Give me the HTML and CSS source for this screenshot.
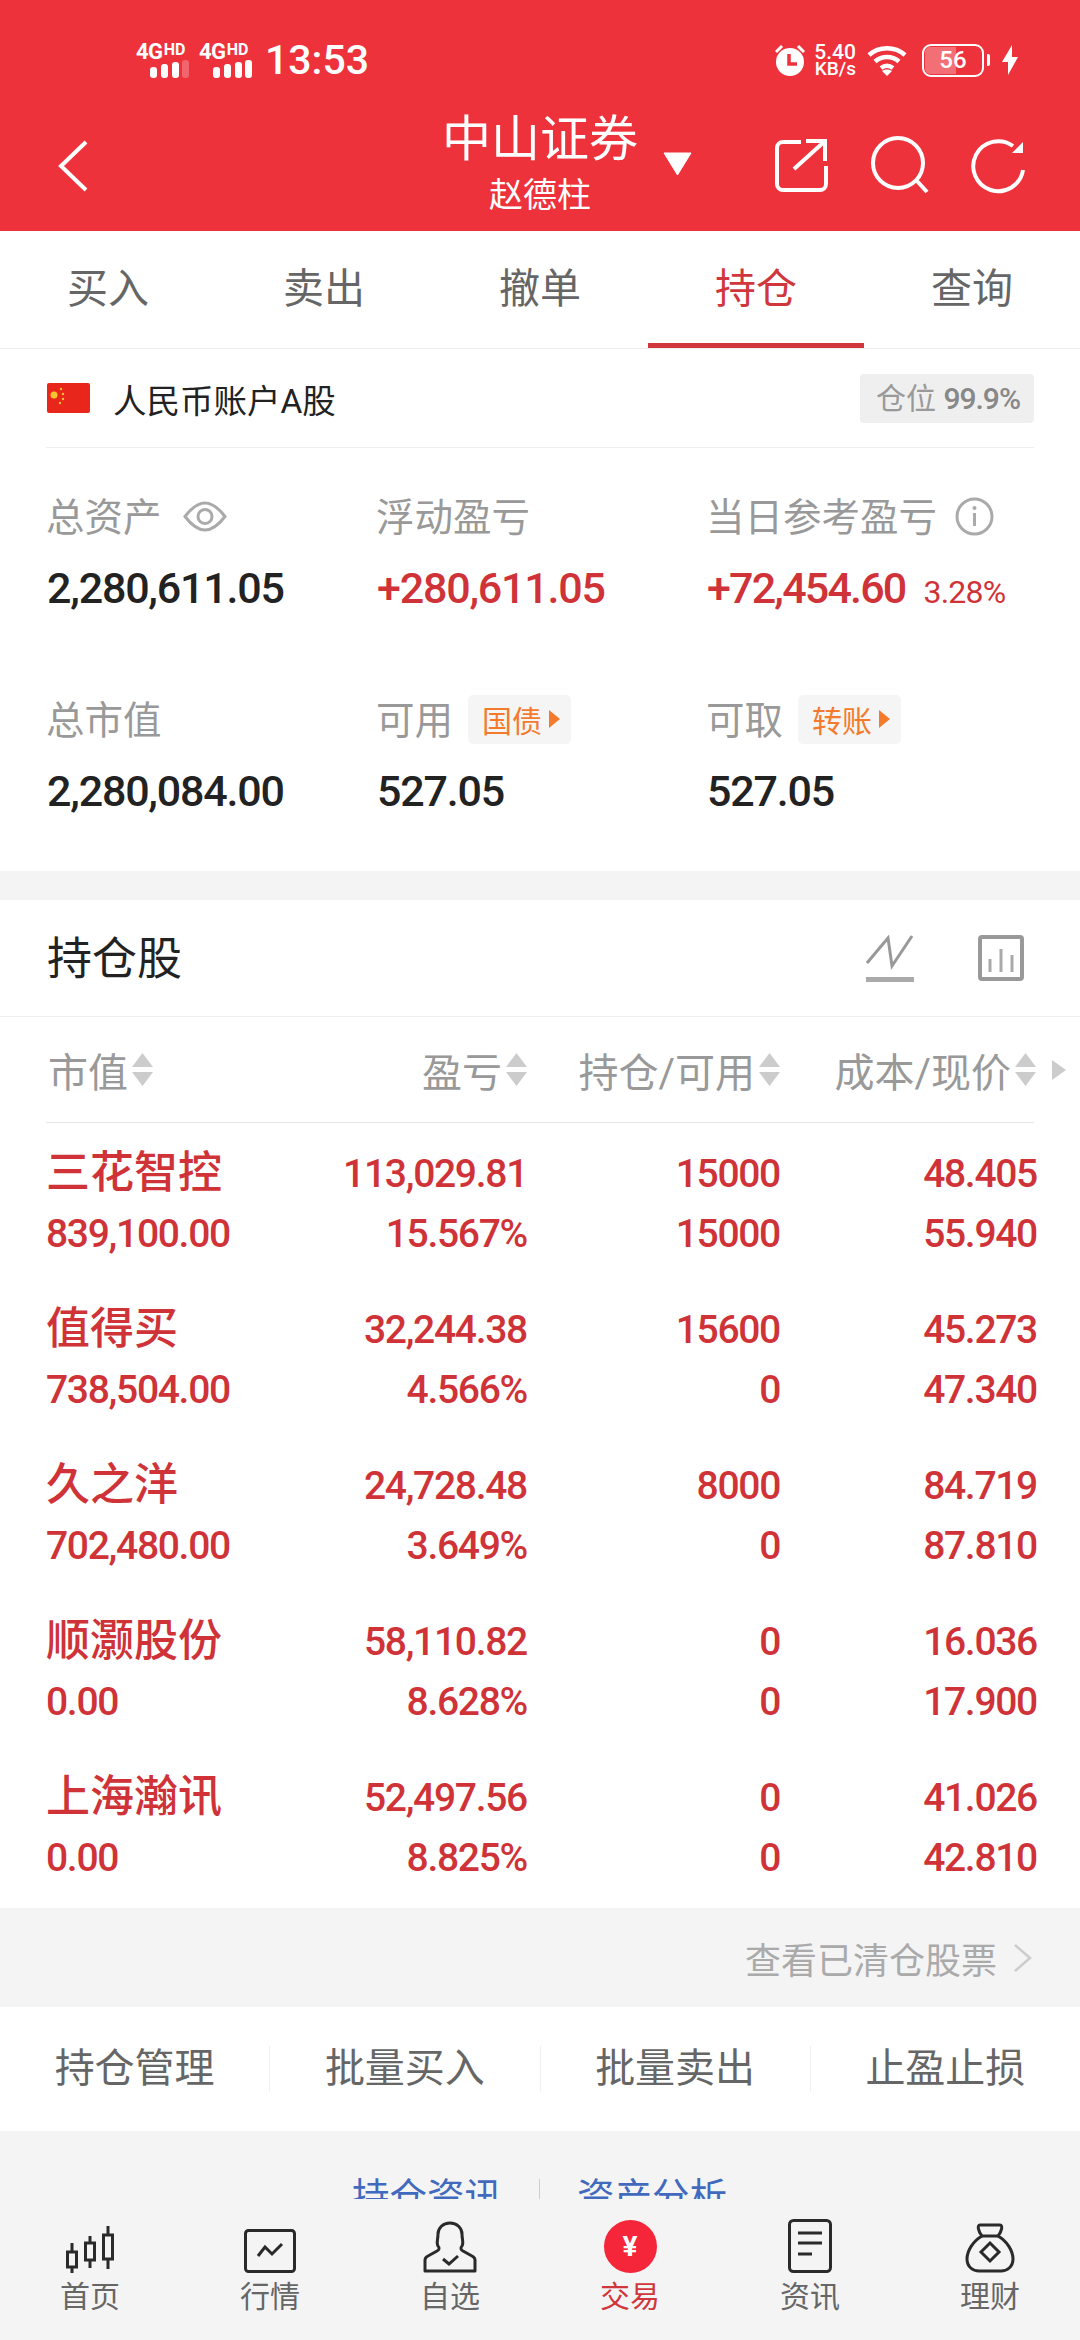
FILE: index.html
```html
<!DOCTYPE html>
<html lang="zh-CN">
  <head>
    <meta charset="utf-8">
    <title>中山证券</title>
    <link rel="stylesheet" href="styles.css">
  </head>
  <body>
    <div id="main">
      <div class="top">
        <div class="status">
          <div class="sim">
            <div class="net">4G<small>HD</small></div>
            <svg width="39" height="18" viewBox="0 0 39 18"><rect x="0" y="7" width="7" height="11" rx="3" fill="#fff"/><rect x="11" y="4" width="7" height="14" rx="3" fill="#fff"/><rect x="22" y="2" width="7" height="16" rx="3" fill="#fff"/><rect x="32" y="0" width="7" height="18" rx="3" fill="#fff" opacity=".25"/></svg>
          </div>
          <div class="sim">
            <div class="net">4G<small>HD</small></div>
            <svg width="39" height="18" viewBox="0 0 39 18"><rect x="0" y="7" width="7" height="11" rx="3" fill="#fff"/><rect x="11" y="4" width="7" height="14" rx="3" fill="#fff"/><rect x="22" y="2" width="7" height="16" rx="3" fill="#fff"/><rect x="32" y="0" width="7" height="18" rx="3" fill="#fff"/></svg>
          </div>
          <div class="time">13:53</div>
          <div class="status-right">
            <svg class="alarm" width="32" height="32" viewBox="0 0 32 32"><circle cx="16" cy="18" r="14" fill="#fff"/><path d="M15 10v10h8" fill="none" stroke="#ee323c" stroke-width="3.5"/><path d="M2 8l6-6M30 8l-6-6" stroke="#fff" stroke-width="3"/></svg>
            <div class="speed"><div>5.40</div><div class="unit">KB/s</div></div>
            <svg class="wifi" width="40" height="31" viewBox="0 0 40 31"><path d="M2 10C12 1 28 1 38 10M8 16.500c7-6 17-6 24 0M14 23c4-3 8-3 12 0" fill="none" stroke="#fff" stroke-width="4.500"/><path d="M15 26c3-2 7-2 10 0l-5 5z" fill="#fff"/></svg>
            <div class="battery"><div class="battery-fill"></div><span>56</span></div>
            <svg class="bolt" width="16" height="30" viewBox="0 0 16 30"><path d="M10 0L0 17h6L6 30 16 12h-6z" fill="#fff"/></svg>
          </div>
        </div>
        <div class="header">
          <div class="header-left">
            <svg width="30" height="54" viewBox="0 0 30 54"><path d="M28 3L3 27l25 24" fill="none" stroke="#fff" stroke-width="4"/></svg>
          </div>
          <div class="header-title">
            <div class="broker">中山证券</div>
            <div class="owner">赵德柱</div>
          </div>
          <div class="header-right">
            <svg class="caret" width="29" height="24" viewBox="0 0 29 24"><path d="M1 1h27L14.500 23z" fill="#fff" stroke="#fff" stroke-linejoin="round"/></svg>
            <svg class="share" width="54" height="54" viewBox="0 0 54 54"><path d="M27 4H9a6 6 0 0 0-6 6v36a6 6 0 0 0 6 6h37a6 6 0 0 0 6-6V28M20 31L51 3M32 3h19v20" fill="none" stroke="#fff" stroke-width="4"/></svg>
            <svg class="search" width="58" height="58" viewBox="0 0 58 58"><circle cx="27" cy="27" r="25" fill="none" stroke="#fff" stroke-width="4"/><path d="M46 45l10 11" stroke="#fff" stroke-width="4"/></svg>
            <svg class="refresh" width="56" height="58" viewBox="0 0 56 58"><path d="M42 9A25 25 0 1 0 52 33" fill="none" stroke="#fff" stroke-width="4"/><path d="M52 5v11H41z" fill="#fff"/></svg>
          </div>
        </div>
      </div>

      <div class="tabs">
        <div class="tab">买入</div>
        <div class="tab">卖出</div>
        <div class="tab">撤单</div>
        <div class="tab active">持仓</div>
        <div class="tab">查询</div>
      </div>

      <div class="account-wrap">
        <div class="account">
          <svg class="flag" width="43" height="30" viewBox="0 0 43 30"><rect width="43" height="30" rx="2" fill="#e8261c"/><circle cx="7" cy="12" r="3.500" fill="#f7c32e"/><circle cx="14" cy="6" r="1.200" fill="#f7c32e"/><circle cx="16" cy="11" r="1.200" fill="#f7c32e"/><circle cx="16" cy="16" r="1.200" fill="#f7c32e"/><circle cx="13" cy="20" r="1.200" fill="#f7c32e"/></svg>
          <div class="account-name">人民币账户A股</div>
          <div class="position">仓位 <span>99.9%</span></div>
        </div>
      </div>

      <div class="summary">
        <div class="cell">
          <div class="label">总资产<svg class="eye" width="44" height="31" viewBox="0 0 44 31"><path d="M2 15.500C10 5 16 2 22 2s12 3 20 13.500C34 26 28 29 22 29S10 26 2 15.500z" fill="none" stroke="#aaa" stroke-width="3"/><circle cx="22" cy="15.500" r="7" fill="none" stroke="#aaa" stroke-width="3"/></svg></div>
          <div class="value">2,280,611.05</div>
        </div>
        <div class="cell">
          <div class="label">浮动盈亏</div>
          <div class="value red">+280,611.05</div>
        </div>
        <div class="cell">
          <div class="label">当日参考盈亏<svg class="info" width="39" height="39" viewBox="0 0 39 39"><circle cx="19.500" cy="19.500" r="17.500" fill="none" stroke="#aaa" stroke-width="3"/><path d="M19.500 16v13" stroke="#aaa" stroke-width="3"/><circle cx="19.500" cy="11" r="2" fill="#aaa"/></svg></div>
          <div class="value red tight">+72,454.60<span class="pct">3.28%</span></div>
        </div>
        <div class="cell">
          <div class="label">总市值</div>
          <div class="value">2,280,084.00</div>
        </div>
        <div class="cell">
          <div class="label">可用<span class="pill">国债<i></i></span></div>
          <div class="value">527.05</div>
        </div>
        <div class="cell">
          <div class="label">可取<span class="pill">转账<i></i></span></div>
          <div class="value">527.05</div>
        </div>
      </div>

      <div class="gap"></div>

      <div class="hold-title">
        <div class="hold-name">持仓股</div>
        <svg class="line-icon" width="48" height="47" viewBox="0 0 48 47"><path d="M1 28L22 3l4 28L46 1" fill="none" stroke="#999" stroke-width="3"/><rect y="42" width="48" height="5" fill="#aaa"/></svg>
        <svg class="bar-icon" width="46" height="46" viewBox="0 0 46 46"><rect x="2" y="2" width="42" height="42" rx="2" fill="none" stroke="#999" stroke-width="4"/><path d="M12 24v13M23 14v23M34 20v17" stroke="#aaa" stroke-width="3"/></svg>
      </div>

      <div class="table-head">
        <div class="th left">市值<svg class="sort" width="21" height="33" viewBox="0 0 21 33"><path d="M10.500 0L21 14H0zM0 19h21L10.500 33z" fill="#ccc"/></svg></div>
        <div class="th">盈亏<svg class="sort" width="21" height="33" viewBox="0 0 21 33"><path d="M10.500 0L21 14H0zM0 19h21L10.500 33z" fill="#ccc"/></svg></div>
        <div class="th">持仓/可用<svg class="sort" width="21" height="33" viewBox="0 0 21 33"><path d="M10.500 0L21 14H0zM0 19h21L10.500 33z" fill="#ccc"/></svg></div>
        <div class="th">成本/现价<svg class="sort" width="21" height="33" viewBox="0 0 21 33"><path d="M10.500 0L21 14H0zM0 19h21L10.500 33z" fill="#ccc"/></svg></div>
        <div class="th"><svg width="14" height="20" viewBox="0 0 14 20"><path d="M0 0l14 10L0 20z" fill="#ccc"/></svg></div>
      </div>
      <div class="table-line-wrap"><div class="table-line"></div></div>

      <div class="rows">
        <div class="row">
          <div class="name">三花智控</div><div>113,029.81</div><div>15000</div><div>48.405</div>
          <div class="left">839,100.00</div><div>15.567%</div><div>15000</div><div>55.940</div>
        </div>
        <div class="row">
          <div class="name">值得买</div><div>32,244.38</div><div>15600</div><div>45.273</div>
          <div class="left">738,504.00</div><div>4.566%</div><div>0</div><div>47.340</div>
        </div>
        <div class="row">
          <div class="name">久之洋</div><div>24,728.48</div><div>8000</div><div>84.719</div>
          <div class="left">702,480.00</div><div>3.649%</div><div>0</div><div>87.810</div>
        </div>
        <div class="row">
          <div class="name">顺灏股份</div><div>58,110.82</div><div>0</div><div>16.036</div>
          <div class="left">0.00</div><div>8.628%</div><div>0</div><div>17.900</div>
        </div>
        <div class="row">
          <div class="name">上海瀚讯</div><div>52,497.56</div><div>0</div><div>41.026</div>
          <div class="left">0.00</div><div>8.825%</div><div>0</div><div>42.810</div>
        </div>
      </div>

      <div class="cleared">查看已清仓股票<svg width="19" height="28" viewBox="0 0 19 28"><path d="M2 1l15 13L2 27" fill="none" stroke="#ccc" stroke-width="2.500"/></svg></div>

      <div class="actions">
        <div class="action">持仓管理</div>
        <div class="action">批量买入</div>
        <div class="action">批量卖出</div>
        <div class="action">止盈止损</div>
      </div>

      <div class="links">
        <span class="link">持仓资讯</span>
        <span class="link-line"></span>
        <span class="link">资产分析</span>
      </div>
    </div>

    <div class="nav">
      <div class="nav-item">
        <div class="nav-icon"><svg width="48" height="47" viewBox="0 0 48 47" fill="none" stroke="#2a2a2a" stroke-width="3"><rect x="1.500" y="26" width="9" height="15"/><path d="M6 17v9M6 41v6"/><rect x="19.500" y="17" width="9" height="17"/><path d="M24 10v7M24 34v8"/><rect x="37.500" y="9" width="9" height="24"/><path d="M42 0v9M42 33v10"/></svg></div>
        首页
      </div>
      <div class="nav-item">
        <div class="nav-icon"><svg width="52" height="44" viewBox="0 0 52 44" fill="none" stroke="#2a2a2a" stroke-width="3"><rect x="1.500" y="1.500" width="49" height="41" rx="3"/><path d="M14 27l7-9 7 7 10-10"/></svg></div>
        行情
      </div>
      <div class="nav-item">
        <div class="nav-icon"><svg width="54" height="52" viewBox="0 0 54 52" fill="none" stroke="#2a2a2a" stroke-width="3"><path d="M2 50H52V39c0-2-1-3-3-4l-9-5c-2-1-3-3-1-5 2-3 0-6 0-12 0-6-5-11-12-11S15 7 15 13c0 6-2 9 0 12 2 2 1 4-1 5l-9 5c-2 1-3 2-3 4z" stroke-linejoin="round"/><path d="M20 38l6 5 9-8"/></svg></div>
        自选
      </div>
      <div class="nav-item active">
        <div class="nav-icon"><div class="trade-dot">¥</div></div>
        交易
      </div>
      <div class="nav-item">
        <div class="nav-icon"><svg width="44" height="54" viewBox="0 0 44 54" fill="none" stroke="#2a2a2a" stroke-width="3"><rect x="1.500" y="1.500" width="41" height="51" rx="4"/><path d="M10 14h24M10 24h24M10 35h14"/></svg></div>
        资讯
      </div>
      <div class="nav-item">
        <div class="nav-icon"><svg width="50" height="50" viewBox="0 0 50 50" fill="none" stroke="#2a2a2a" stroke-width="3"><path d="M17 13C8 18 2 28 2 36c0 8 6 12 12 12h22c6 0 12-4 12-12 0-8-6-18-15-23"/><path d="M17 13C13 8 12 2 15 2h20c3 0 2 6-2 11z" stroke-linejoin="round"/><path d="M25 20l9 9-9 9-9-9z"/></svg></div>
        理财
      </div>
    </div>
  </body>
</html>
```

FILE: styles.css
```css
html, body {
  margin: 0;
  height: 2340px;
}
body {
  display: flex;
  flex-direction: column;
  background: #f4f4f5;
  font-family: Roboto, "Noto Sans CJK SC", sans-serif;
  overflow: hidden;
}
svg {
  display: block;
  flex: none;
}
#main {
  height: 2199px;
  overflow: hidden;
  flex: none;
}
.top {
  background: #ee323c;
  color: #fff;
  height: 231px;
}
.status {
  display: flex;
  align-items: center;
  height: 64px;
  padding: 28px 62px 0 136px;
}
.sim {
  display: flex;
  flex-direction: column;
  align-items: flex-end;
  width: 53px;
  margin-right: 10px;
}
.net {
  width: 100%;
  font-size: 22px;
  line-height: 16px;
  font-weight: 700;
  letter-spacing: -0.5px;
  white-space: nowrap;
}
.net small {
  font-size: 16px;
  vertical-align: 4px;
  margin-left: 1px;
  letter-spacing: 0;
}
.time {
  font-size: 41px;
  font-weight: 500;
  margin-left: 3px;
}
.status-right {
  display: flex;
  align-items: center;
  margin-left: auto;
}
.speed {
  margin-left: 8px;
  text-align: right;
  font-size: 21px;
  line-height: 18px;
  font-weight: 500;
}
.speed .unit {
  font-size: 19px;
  line-height: 16px;
}
.wifi {
  margin-left: 11px;
}
.battery {
  position: relative;
  display: flex;
  align-items: center;
  justify-content: center;
  box-sizing: border-box;
  width: 62px;
  height: 33px;
  margin-left: 15px;
  border: 2.5px solid #fff;
  border-radius: 9px;
  font-size: 24px;
  font-weight: 500;
}
.battery span {
  position: relative;
}
.battery::after {
  content: "";
  position: absolute;
  right: -8px;
  top: 8px;
  width: 3px;
  height: 12px;
  background: #fff;
  border-radius: 0 2px 2px 0;
}
.battery-fill {
  position: absolute;
  left: 1px;
  top: 1px;
  bottom: 1px;
  width: 31px;
  background: rgba(255, 255, 255, 0.3);
  border-radius: 5px 0 0 5px;
}
.bolt {
  margin-left: 18px;
}
.header {
  display: grid;
  grid-template-columns: 1fr auto 1fr;
  height: 139px;
}
.header-left {
  padding: 47px 0 0 58px;
}
.header-title {
  text-align: center;
  padding-top: 19px;
}
.broker {
  font-size: 49px;
  line-height: 58px;
}
.owner {
  font-size: 34px;
  line-height: 46px;
  margin-top: 3px;
}
.header-right {
  display: flex;
  align-items: flex-start;
}
.caret {
  margin: 60px 0 0 25px;
}
.share {
  margin: 46px 0 0 82px;
}
.search {
  margin: 44px 0 0 43px;
}
.refresh {
  margin: 45px 0 0 42px;
}

.tabs {
  display: flex;
  height: 117px;
  background: #fff;
  border-bottom: 1px solid #eee;
}
.tab {
  flex: 1;
  box-sizing: border-box;
  text-align: center;
  font-size: 41px;
  line-height: 116px;
  color: #666;
}
.tab.active {
  color: #d0363c;
  border-bottom: 5px solid #d0363c;
  height: 117px;
}

.account-wrap {
  padding: 0 46px;
  background: #fff;
}
.account {
  display: flex;
  align-items: center;
  height: 99px;
  border-bottom: 1px solid #eee;
  box-sizing: border-box;
}
.flag {
  margin-left: 1px;
}
.account-name {
  margin-left: 23px;
  font-size: 33.500px;
  color: #222;
}
.position {
  margin-left: auto;
  height: 49px;
  line-height: 49px;
  padding: 0 14px 0 16px;
  background: #efefef;
  border-radius: 4px;
  font-size: 30px;
  color: #999;
}
.position span {
  font-size: 30px;
  font-weight: 500;
  color: #888;
  letter-spacing: -1px;
}

.summary {
  display: grid;
  grid-template-columns: 330px 330px 1fr;
  row-gap: 76px;
  padding: 43px 0 50px 46px;
  background: #fff;
}
.label {
  display: flex;
  align-items: center;
  box-sizing: border-box;
  height: 50px;
  padding-bottom: 4px;
  font-size: 38.500px;
  color: #999;
}
.label svg,
.label .pill {
  margin-top: 4px;
}
.eye {
  margin-left: 21px;
}
.info {
  margin-left: 18px;
}
.pill {
  display: flex;
  align-items: center;
  height: 49px;
  margin-left: 15px;
  padding: 0 11px 0 14px;
  background: #f5f5f5;
  border-radius: 5px;
  font-size: 30px;
  color: #f47a2e;
}
.pill i {
  width: 0;
  height: 0;
  margin-left: 7px;
  border-left: 11px solid #f47a2e;
  border-top: 9px solid transparent;
  border-bottom: 9px solid transparent;
}
.value {
  margin-top: 17px;
  padding-left: 1px;
  height: 60px;
  line-height: 60px;
  font-size: 43px;
  font-weight: 500;
  letter-spacing: -1.200px;
  color: #222;
}
.value.red,
.value .pct {
  color: #cf3338;
}
.value.tight {
  letter-spacing: -1.800px;
}
.value .pct {
  margin-left: 18px;
  font-size: 32px;
  font-weight: 400;
  letter-spacing: -0.800px;
}
.gap {
  height: 29px;
}

.hold-title {
  display: flex;
  align-items: center;
  height: 116px;
  padding: 0 56px 0 47px;
  background: #fff;
  border-bottom: 1px solid #eee;
}
.hold-name {
  font-size: 45px;
  line-height: 56px;
  padding-top: 4px;
  color: #222;
  margin-right: auto;
}
.line-icon {
  margin-right: 64px;
}
.table-head {
  display: grid;
  grid-template-columns: 252px 229px 253px 256px 30px;
  height: 105px;
  padding: 0 14px 0 46px;
  background: #fff;
}
.th {
  display: flex;
  align-items: center;
  justify-content: flex-end;
  font-size: 40px;
  color: #999;
}
.th.left {
  justify-content: flex-start;
  padding-left: 2px;
}
.sort {
  margin-left: 4px;
}
.table-line-wrap {
  padding: 0 46px;
  background: #fff;
}
.table-line {
  height: 1px;
  background: #e6e6e6;
}
.rows {
  padding-bottom: 5px;
  background: #fff;
}
.row {
  display: grid;
  grid-template-columns: 252px 229px 253px 257px;
  grid-auto-rows: 60px;
  align-items: center;
  height: 120px;
  padding: 21px 43px 15px 46px;
  font-size: 39px;
  font-weight: 500;
  letter-spacing: -1.300px;
  color: #cf3338;
  text-align: right;
}
.row .left {
  text-align: left;
}
.row .name {
  text-align: left;
  padding-bottom: 10px;
  font-size: 44px;
  letter-spacing: 0;
}
.cleared {
  display: flex;
  align-items: center;
  justify-content: flex-end;
  height: 99px;
  padding-right: 48px;
  font-size: 36px;
  color: #aaa;
}
.cleared svg {
  margin-left: 16px;
}
.actions {
  display: flex;
  align-items: center;
  height: 124px;
  background: #fff;
}
.action {
  flex: 1;
  height: 46px;
  line-height: 46px;
  text-align: center;
  font-size: 40px;
  color: #666;
  border-left: 1px solid #f0f0f0;
}
.action:first-child {
  border-left: none;
}
.links {
  display: flex;
  align-items: center;
  padding: 41px 0 0 352px;
  font-size: 37.500px;
  line-height: 50px;
  color: #4169bd;
}
.link-line {
  width: 1px;
  height: 36px;
  margin: 0 37px 0 37px;
  background: #ccd;
}

.nav {
  display: flex;
  flex: none;
  height: 141px;
  box-sizing: border-box;
  padding-top: 20px;
}
.nav-item {
  flex: 1;
  text-align: center;
  font-size: 30px;
  line-height: 40px;
  color: #666;
}
.nav-item.active {
  color: #d0363c;
}
.nav-icon {
  display: flex;
  align-items: flex-end;
  justify-content: center;
  height: 54px;
  margin-bottom: 4px;
}
.trade-dot {
  width: 53px;
  height: 53px;
  line-height: 53px;
  border-radius: 50%;
  background: #f5263a;
  color: #fff;
  font-size: 28px;
  font-weight: 700;
}
```
